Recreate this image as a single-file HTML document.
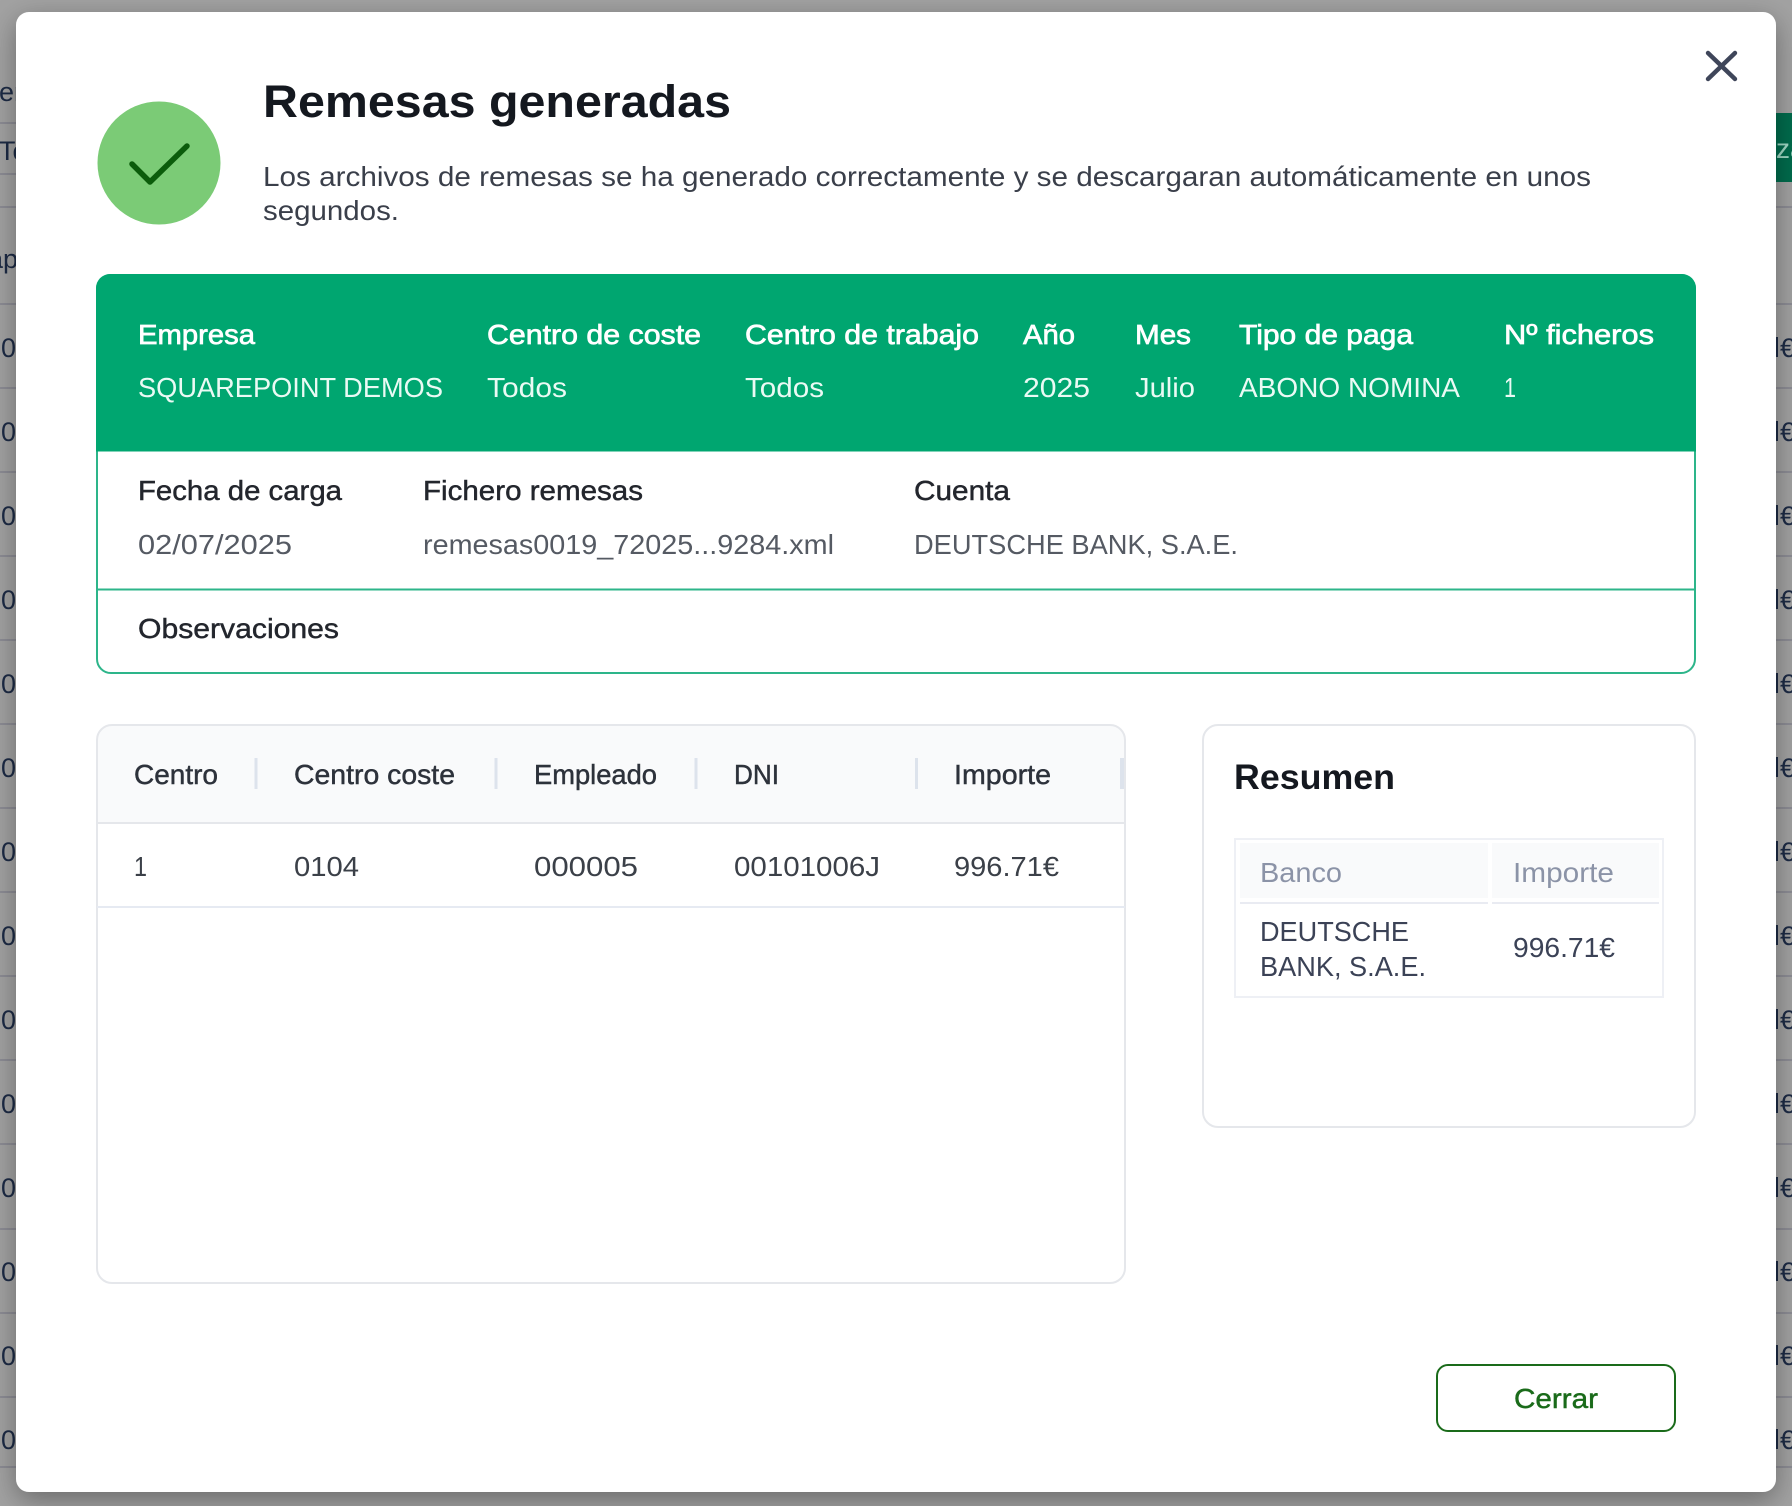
<!DOCTYPE html>
<html lang="es">
<head>
<meta charset="utf-8">
<title>Remesas generadas</title>
<style>
html,body{margin:0;padding:0;width:1792px;height:1506px;overflow:hidden;background:#a2a2a2}
svg{display:block;position:absolute;left:0;top:0;filter:blur(.35px)}
text{font-family:"Liberation Sans",Arial,sans-serif;font-size:28px}
.m{stroke-width:.45px}
.lab{fill:#23262d;stroke:#23262d}
.hw{fill:#fff;stroke:#fff;stroke-width:.7px}
.vw{fill:#eafaf4}
.val{fill:#555a63}
.th{fill:#2d323b;stroke:#2d323b}
.td{fill:#3b4048}
.s{fill:#3b4256}
.g{fill:#8b93a7}
.bgt{fill:#1c2a44;font-size:27px}
</style>
</head>
<body>
<svg width="1792" height="1506" viewBox="0 0 1792 1506" xmlns="http://www.w3.org/2000/svg">
<defs>
<filter id="sh" x="-10%" y="-10%" width="120%" height="120%">
<feDropShadow dx="0" dy="8" stdDeviation="14" flood-color="#000" flood-opacity=".35"/>
</filter>
</defs>

<!-- backdrop page -->
<rect width="1792" height="1506" fill="#a2a2a2"/>
<g stroke="#8c8c94" stroke-width="2">
<path d="M0 123H16M0 174H16M0 207H16"/>
<path d="M0 304H16M0 388H16M0 472H16M0 556H16M0 640H16M0 724H16M0 808H16M0 892H16M0 976H16M0 1060H16M0 1144H16M0 1229H16M0 1313H16M0 1397H16M0 1467H16"/>
<path d="M1776 207H1792M1776 304H1792M1776 388H1792M1776 472H1792M1776 556H1792M1776 640H1792M1776 724H1792M1776 808H1792M1776 892H1792M1776 976H1792M1776 1060H1792M1776 1144H1792M1776 1229H1792M1776 1313H1792M1776 1397H1792M1776 1467H1792"/>
</g>
<rect x="1776" y="113" width="16" height="69" fill="#006b4c"/>
<text x="1776" y="158" fill="#9fd8c4">za</text>
<g fill="#1c2a44">
<rect x="1776" y="337" width="2" height="20"/><rect x="1776" y="421" width="2" height="20"/><rect x="1776" y="505" width="2" height="20"/><rect x="1776" y="589" width="2" height="20"/><rect x="1776" y="673" width="2" height="20"/><rect x="1776" y="757" width="2" height="20"/><rect x="1776" y="841" width="2" height="20"/><rect x="1776" y="925" width="2" height="20"/><rect x="1776" y="1009" width="2" height="20"/><rect x="1776" y="1093" width="2" height="20"/><rect x="1776" y="1177" width="2" height="20"/><rect x="1776" y="1261" width="2" height="20"/><rect x="1776" y="1345" width="2" height="20"/><rect x="1776" y="1429" width="2" height="20"/>
</g>
<g>
<text class="bgt" x="-1" y="101">en</text>
<text class="bgt" x="-1" y="160">To</text>
<text class="bgt" x="-12" y="268">ap</text>
<text class="bgt" x="1" y="357">0</text><text class="bgt" x="1" y="441">0</text><text class="bgt" x="1" y="525">0</text><text class="bgt" x="1" y="609">0</text><text class="bgt" x="1" y="693">0</text><text class="bgt" x="1" y="777">0</text><text class="bgt" x="1" y="861">0</text><text class="bgt" x="1" y="945">0</text><text class="bgt" x="1" y="1029">0</text><text class="bgt" x="1" y="1113">0</text><text class="bgt" x="1" y="1197">0</text><text class="bgt" x="1" y="1281">0</text><text class="bgt" x="1" y="1365">0</text><text class="bgt" x="1" y="1449">0</text>
<text class="bgt" x="1780" y="357">€</text><text class="bgt" x="1780" y="441">€</text><text class="bgt" x="1780" y="525">€</text><text class="bgt" x="1780" y="609">€</text><text class="bgt" x="1780" y="693">€</text><text class="bgt" x="1780" y="777">€</text><text class="bgt" x="1780" y="861">€</text><text class="bgt" x="1780" y="945">€</text><text class="bgt" x="1780" y="1029">€</text><text class="bgt" x="1780" y="1113">€</text><text class="bgt" x="1780" y="1197">€</text><text class="bgt" x="1780" y="1281">€</text><text class="bgt" x="1780" y="1365">€</text><text class="bgt" x="1780" y="1449">€</text>
</g>

<!-- modal -->
<rect x="16" y="12" width="1760" height="1480" rx="13" fill="#fff" filter="url(#sh)"/>

<!-- close -->
<path d="M1708 53L1735 79M1735 53L1708 79" stroke="#3f465a" stroke-width="4.4" stroke-linecap="round" fill="none"/>

<!-- success icon -->
<circle cx="159" cy="163" r="61.5" fill="#7bcb76"/>
<path d="M132 164L150 182L187 146" stroke="#0b5c0b" stroke-width="5.5" stroke-linecap="round" stroke-linejoin="round" fill="none"/>

<!-- heading -->
<text x="263" y="117" textLength="468" lengthAdjust="spacingAndGlyphs" style="font-size:45px;font-weight:700" fill="#14181f">Remesas generadas</text>
<text x="263" y="186" textLength="1328" lengthAdjust="spacingAndGlyphs" fill="#3a3f4a">Los archivos de remesas se ha generado correctamente y se descargaran automáticamente en unos</text>
<text x="263" y="220" textLength="136" lengthAdjust="spacingAndGlyphs" fill="#3a3f4a">segundos.</text>

<!-- info card -->
<rect x="97" y="275" width="1598" height="398" rx="14" fill="#fff" stroke="#2db58a" stroke-width="2"/>
<path d="M96 451.5V288A14 14 0 0 1 110 274H1682A14 14 0 0 1 1696 288V451.5Z" fill="#00a670"/>
<rect x="97" y="588.5" width="1598" height="2" fill="#2db58a"/>

<g>
<text class="hw" x="138" y="344" textLength="117" lengthAdjust="spacingAndGlyphs">Empresa</text>
<text class="hw" x="487" y="344" textLength="214" lengthAdjust="spacingAndGlyphs">Centro de coste</text>
<text class="hw" x="745" y="344" textLength="234" lengthAdjust="spacingAndGlyphs">Centro de trabajo</text>
<text class="hw" x="1023" y="344" textLength="52" lengthAdjust="spacingAndGlyphs">Año</text>
<text class="hw" x="1135" y="344" textLength="56" lengthAdjust="spacingAndGlyphs">Mes</text>
<text class="hw" x="1239" y="344" textLength="174" lengthAdjust="spacingAndGlyphs">Tipo de paga</text>
<text class="hw" x="1504" y="344" textLength="150" lengthAdjust="spacingAndGlyphs">Nº ficheros</text>
</g>
<text class="vw" x="138" y="397" textLength="305" lengthAdjust="spacingAndGlyphs">SQUAREPOINT DEMOS</text>
<text class="vw" x="487" y="397" textLength="80" lengthAdjust="spacingAndGlyphs">Todos</text>
<text class="vw" x="745" y="397" textLength="79" lengthAdjust="spacingAndGlyphs">Todos</text>
<text class="vw" x="1023" y="397" textLength="67" lengthAdjust="spacingAndGlyphs">2025</text>
<text class="vw" x="1135" y="397" textLength="60" lengthAdjust="spacingAndGlyphs">Julio</text>
<text class="vw" x="1239" y="397" textLength="221" lengthAdjust="spacingAndGlyphs">ABONO NOMINA</text>
<text class="vw" x="1504" y="397" textLength="12" lengthAdjust="spacingAndGlyphs">1</text>

<text class="lab m" x="138" y="500" textLength="204" lengthAdjust="spacingAndGlyphs">Fecha de carga</text>
<text class="lab m" x="423" y="500" textLength="220" lengthAdjust="spacingAndGlyphs">Fichero remesas</text>
<text class="lab m" x="914" y="500" textLength="96" lengthAdjust="spacingAndGlyphs">Cuenta</text>
<text class="val" x="138" y="554" textLength="154" lengthAdjust="spacingAndGlyphs">02/07/2025</text>
<text class="val" x="423" y="554" textLength="411" lengthAdjust="spacingAndGlyphs">remesas0019_72025...9284.xml</text>
<text class="val" x="914" y="554" textLength="324" lengthAdjust="spacingAndGlyphs">DEUTSCHE BANK, S.A.E.</text>
<text class="lab m" x="138" y="638" textLength="201" lengthAdjust="spacingAndGlyphs">Observaciones</text>

<!-- detail table -->
<path d="M98 823V740A15 15 0 0 1 113 725H1110A15 15 0 0 1 1125 740V823Z" fill="#f9fafb"/>
<rect x="97" y="725" width="1028" height="558" rx="15" fill="none" stroke="#e5e7eb" stroke-width="2"/>
<rect x="97" y="822" width="1028" height="2" fill="#e5e7eb"/>
<rect x="97" y="906" width="1028" height="2" fill="#e6eaf2"/>
<g fill="#dde3ec">
<rect x="254.500" y="758" width="3" height="31"/>
<rect x="494.500" y="758" width="3" height="31"/>
<rect x="694.500" y="758" width="3" height="31"/>
<rect x="915" y="758" width="3" height="31"/>
<rect x="1120" y="758" width="4" height="31"/>
</g>
<text class="th m" x="134" y="784" textLength="84" lengthAdjust="spacingAndGlyphs">Centro</text>
<text class="th m" x="294" y="784" textLength="161" lengthAdjust="spacingAndGlyphs">Centro coste</text>
<text class="th m" x="534" y="784" textLength="123" lengthAdjust="spacingAndGlyphs">Empleado</text>
<text class="th m" x="734" y="784" textLength="45" lengthAdjust="spacingAndGlyphs">DNI</text>
<text class="th m" x="954" y="784" textLength="97" lengthAdjust="spacingAndGlyphs">Importe</text>
<text class="td" x="134" y="876" textLength="13" lengthAdjust="spacingAndGlyphs">1</text>
<text class="td" x="294" y="876" textLength="65" lengthAdjust="spacingAndGlyphs">0104</text>
<text class="td" x="534" y="876" textLength="104" lengthAdjust="spacingAndGlyphs">000005</text>
<text class="td" x="734" y="876" textLength="146" lengthAdjust="spacingAndGlyphs">00101006J</text>
<text class="td" x="954" y="876" textLength="105" lengthAdjust="spacingAndGlyphs">996.71€</text>

<!-- summary -->
<rect x="1203" y="725" width="492" height="402" rx="15" fill="#fff" stroke="#e5e7eb" stroke-width="2"/>
<text x="1234" y="789" textLength="161" lengthAdjust="spacingAndGlyphs" style="font-size:35px;font-weight:700" fill="#14181f">Resumen</text>
<rect x="1235" y="839" width="428" height="158" fill="#fff" stroke="#eef0f5" stroke-width="2"/>
<rect x="1240" y="843" width="248" height="55" fill="#f9fafb"/>
<rect x="1492" y="843" width="167" height="55" fill="#f9fafb"/>
<rect x="1240" y="902" width="248" height="2" fill="#e9ebf2"/>
<rect x="1492" y="902" width="167" height="2" fill="#e9ebf2"/>
<text class="g" x="1260" y="882" textLength="82" lengthAdjust="spacingAndGlyphs">Banco</text>
<text class="g" x="1513" y="882" textLength="101" lengthAdjust="spacingAndGlyphs">Importe</text>
<text class="s" x="1260" y="941" textLength="149" lengthAdjust="spacingAndGlyphs">DEUTSCHE</text>
<text class="s" x="1260" y="976" textLength="166" lengthAdjust="spacingAndGlyphs">BANK, S.A.E.</text>
<text class="s" x="1513" y="957" textLength="102" lengthAdjust="spacingAndGlyphs">996.71€</text>

<!-- button -->
<rect x="1437" y="1365" width="238" height="66" rx="11" fill="#fff" stroke="#1a6b1a" stroke-width="2"/>
<text x="1514" y="1408" textLength="84" lengthAdjust="spacingAndGlyphs" fill="#1a6b1a" stroke="#1a6b1a" stroke-width=".45">Cerrar</text>
</svg>
</body>
</html>
